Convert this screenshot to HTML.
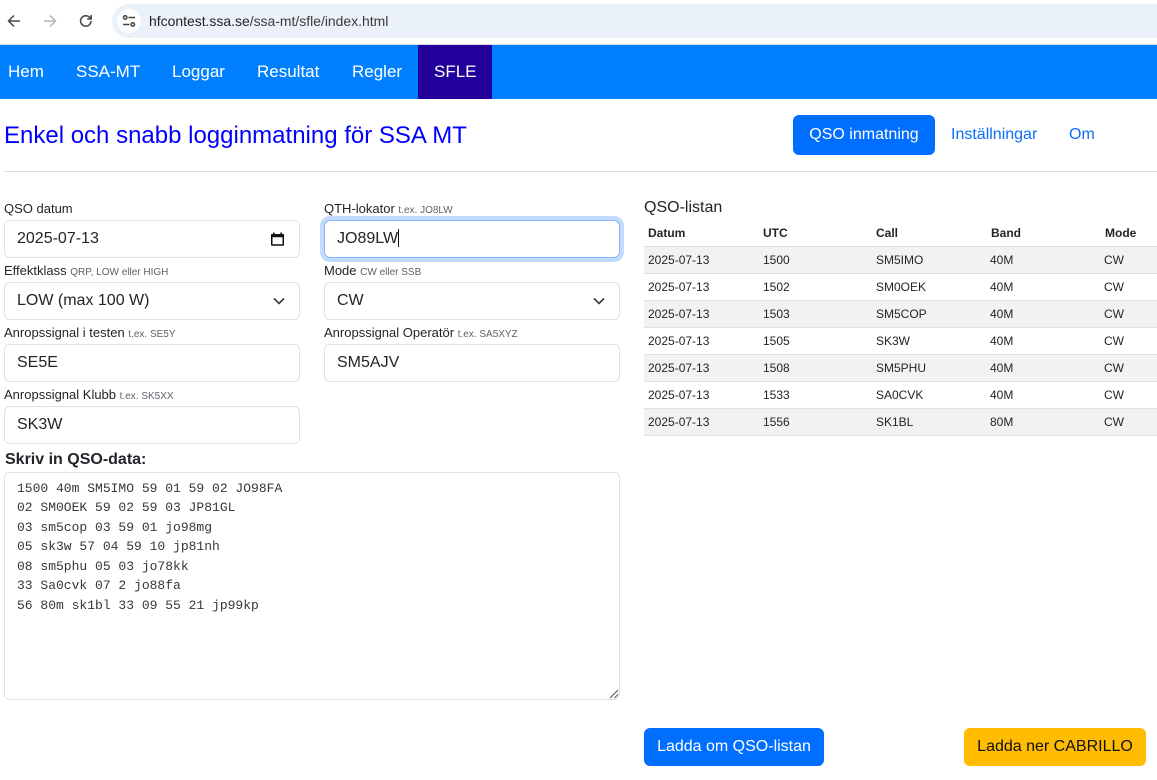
<!DOCTYPE html>
<html lang="sv"><head><meta charset="utf-8"><title>SFLE</title>
<style>
*{box-sizing:border-box}
html,body{margin:0;padding:0;width:1157px;height:780px;overflow:hidden;background:#fff;font-family:"Liberation Sans",sans-serif;color:#212529}
.a{position:absolute;white-space:nowrap}
.nav{top:45px;height:54px;line-height:53px;color:#fff;font-size:17px}
.lbl{font-size:13px;line-height:16px;height:16px;color:#212529}
.lbl small{font-size:10px;color:#5c636a}
.box{height:38px;width:296px;border:1px solid #dee2e6;border-radius:6px;background:#fff;font-size:16px;line-height:36px;padding-left:12px;color:#212529}
.th,.td{font-size:12px;line-height:14px}
.th{font-weight:bold;top:226px}
.row{left:644px;width:513px;height:27px;background:#f2f2f2;border-bottom:1px solid #dee2e6}
.row.w{background:#fff}
.btn{height:38px;border-radius:6px;font-size:16px;line-height:38px;text-align:center}
.mono{left:17px;font-family:"Liberation Mono",monospace;font-size:13px;line-height:19.5px;color:#33383d}
svg{position:absolute;display:block}
</style></head><body>

<!-- browser bar -->
<div class="a" style="left:0;top:0;width:1157px;height:45px;background:#fff;border-bottom:1px solid #d9d9d9"></div>
<svg style="left:6px;top:13px" width="16" height="16" viewBox="0 0 16 16" fill="none" stroke="#4a4a4a" stroke-width="1.5"><path d="M14 8H2.5M8 2.5L2.5 8L8 13.5"/></svg>
<svg style="left:42px;top:13px" width="16" height="16" viewBox="0 0 16 16" fill="none" stroke="#b5b5b5" stroke-width="1.5"><path d="M2 8H13.5M8 2.5L13.5 8L8 13.5"/></svg>
<svg style="left:78px;top:13px" width="16" height="16" viewBox="0 0 16 16" fill="none" stroke="#4a4a4a" stroke-width="1.6"><path d="M13 8A5.2 5.2 0 1 1 11.4 4.2L13.2 6M13.2 2V6H9.2"/></svg>
<div class="a" style="left:112px;top:4px;width:1045px;height:34px;background:#ebf1f9;border-radius:17px 0 0 17px"></div>
<div class="a" style="left:117px;top:9px;width:24px;height:24px;background:#fff;border-radius:12px"></div>
<svg style="left:122px;top:14px" width="14" height="14" viewBox="0 0 14 14" fill="none" stroke="#444" stroke-width="1.5"><circle cx="3.2" cy="3.5" r="1.7"/><path d="M6.5 3.5H13M1 10.5H7.5"/><circle cx="10.8" cy="10.5" r="1.7"/></svg>
<div class="a" style="left:149px;top:13px;font-size:13.95px;line-height:17px;color:#222">hfcontest.ssa.se<span style="color:#3c3c3c">/ssa-mt/sfle/index.html</span></div>

<!-- nav -->
<div class="a" style="left:0;top:45px;width:1157px;height:54px;background:#0080ff"></div>
<div class="a" style="left:418px;top:45px;width:74px;height:54px;background:#22009c"></div>
<div class="a nav" style="left:8px">Hem</div>
<div class="a nav" style="left:76px">SSA-MT</div>
<div class="a nav" style="left:172px">Loggar</div>
<div class="a nav" style="left:257px">Resultat</div>
<div class="a nav" style="left:352px">Regler</div>
<div class="a nav" style="left:434px">SFLE</div>

<!-- header -->
<div class="a" style="left:4px;top:121px;font-size:24px;line-height:30px;color:#0000ff">Enkel och snabb logginmatning för SSA MT</div>
<div class="a" style="left:793px;top:115px;width:142px;height:40px;background:#006eff;border-radius:6px;color:#fff;font-size:16px;line-height:40px;text-align:center">QSO inmatning</div>
<div class="a" style="left:951px;top:125px;font-size:16px;line-height:20px;color:#0d6efd">Inställningar</div>
<div class="a" style="left:1069px;top:125px;font-size:16px;line-height:20px;color:#0d6efd">Om</div>
<div class="a" style="left:4px;top:171px;width:1153px;height:1px;background:#dcdcdc"></div>

<!-- left col -->
<div class="a lbl" style="left:4px;top:201px">QSO datum</div>
<div class="a box" style="left:4px;top:220px">2025-07-13</div>
<svg style="left:270px;top:231px" width="15" height="16" viewBox="0 0 15 16"><path d="M3 1.5h1.6V3h5.8V1.5H12V3h1.2c.5 0 .8.4.8.8v10c0 .5-.4.9-.8.9H1.8c-.5 0-.8-.4-.8-.9v-10c0-.4.3-.8.8-.8H3zM2.5 6.2v7h10v-7z" fill="#111" fill-rule="evenodd"/></svg>

<div class="a lbl" style="left:4px;top:263px">Effektklass <small>QRP, LOW eller HIGH</small></div>
<div class="a box" style="left:4px;top:282px">LOW (max 100 W)</div>
<svg style="left:272px;top:295px" width="14" height="12" viewBox="0 0 14 12" fill="none" stroke="#343a40" stroke-width="1.6"><path d="M2 3.5L7 8.5L12 3.5"/></svg>

<div class="a lbl" style="left:4px;top:325px">Anropssignal i testen <small>t.ex. SE5Y</small></div>
<div class="a box" style="left:4px;top:344px">SE5E</div>

<div class="a lbl" style="left:4px;top:387px">Anropssignal Klubb <small>t.ex. SK5XX</small></div>
<div class="a box" style="left:4px;top:406px">SK3W</div>

<div class="a lbl" style="left:324px;top:201px">QTH-lokator <small>t.ex. JO8LW</small></div>
<div class="a box" style="left:324px;top:220px;border-color:#86b7fe;box-shadow:0 0 0 4px rgba(13,110,253,.25)">JO89LW<span style="display:inline-block;width:1px;height:18px;background:#111;vertical-align:-4px"></span></div>

<div class="a lbl" style="left:324px;top:263px">Mode <small>CW eller SSB</small></div>
<div class="a box" style="left:324px;top:282px">CW</div>
<svg style="left:592px;top:295px" width="14" height="12" viewBox="0 0 14 12" fill="none" stroke="#343a40" stroke-width="1.6"><path d="M2 3.5L7 8.5L12 3.5"/></svg>

<div class="a lbl" style="left:324px;top:325px">Anropssignal Operatör <small>t.ex. SA5XYZ</small></div>
<div class="a box" style="left:324px;top:344px">SM5AJV</div>

<div class="a" style="left:5px;top:450px;font-size:16px;line-height:19px;font-weight:bold;color:#212529">Skriv in QSO-data:</div>
<div class="a" style="left:4px;top:472px;width:616px;height:228px;border:1px solid #dee2e6;border-radius:6px"></div>
<div class="a mono" style="top:479px">1500 40m SM5IMO 59 01 59 02 JO98FA</div>
<div class="a mono" style="top:498px">02 SM0OEK 59 02 59 03 JP81GL</div>
<div class="a mono" style="top:518px">03 sm5cop 03 59 01 jo98mg</div>
<div class="a mono" style="top:537px">05 sk3w 57 04 59 10 jp81nh</div>
<div class="a mono" style="top:557px">08 sm5phu 05 03 jo78kk</div>
<div class="a mono" style="top:576px">33 Sa0cvk 07 2 jo88fa</div>
<div class="a mono" style="top:596px">56 80m sk1bl 33 09 55 21 jp99kp</div>
<svg style="left:609px;top:689px" width="10" height="10" viewBox="0 0 10 10" stroke="#555" stroke-width="1"><path d="M1 9L9 1M5.5 9L9 5.5"/></svg>

<!-- right col -->
<div class="a" style="left:644px;top:198px;font-size:16px;line-height:19px;color:#212529">QSO-listan</div>
<div class="a th" style="left:648px">Datum</div>
<div class="a th" style="left:763px">UTC</div>
<div class="a th" style="left:876px">Call</div>
<div class="a th" style="left:991px">Band</div>
<div class="a th" style="left:1105px">Mode</div>
<div class="a" style="left:644px;top:246px;width:513px;height:1px;background:#dee2e6"></div>

<div class="a row" style="top:247px"></div>
<div class="a row w" style="top:274px"></div>
<div class="a row" style="top:301px"></div>
<div class="a row w" style="top:328px"></div>
<div class="a row" style="top:355px"></div>
<div class="a row w" style="top:382px"></div>
<div class="a row" style="top:409px"></div>

<div class="a td" style="left:648px;top:253px">2025-07-13</div><div class="a td" style="left:763px;top:253px">1500</div><div class="a td" style="left:876px;top:253px">SM5IMO</div><div class="a td" style="left:990px;top:253px">40M</div><div class="a td" style="left:1104px;top:253px">CW</div>
<div class="a td" style="left:648px;top:280px">2025-07-13</div><div class="a td" style="left:763px;top:280px">1502</div><div class="a td" style="left:876px;top:280px">SM0OEK</div><div class="a td" style="left:990px;top:280px">40M</div><div class="a td" style="left:1104px;top:280px">CW</div>
<div class="a td" style="left:648px;top:307px">2025-07-13</div><div class="a td" style="left:763px;top:307px">1503</div><div class="a td" style="left:876px;top:307px">SM5COP</div><div class="a td" style="left:990px;top:307px">40M</div><div class="a td" style="left:1104px;top:307px">CW</div>
<div class="a td" style="left:648px;top:334px">2025-07-13</div><div class="a td" style="left:763px;top:334px">1505</div><div class="a td" style="left:876px;top:334px">SK3W</div><div class="a td" style="left:990px;top:334px">40M</div><div class="a td" style="left:1104px;top:334px">CW</div>
<div class="a td" style="left:648px;top:361px">2025-07-13</div><div class="a td" style="left:763px;top:361px">1508</div><div class="a td" style="left:876px;top:361px">SM5PHU</div><div class="a td" style="left:990px;top:361px">40M</div><div class="a td" style="left:1104px;top:361px">CW</div>
<div class="a td" style="left:648px;top:388px">2025-07-13</div><div class="a td" style="left:763px;top:388px">1533</div><div class="a td" style="left:876px;top:388px">SA0CVK</div><div class="a td" style="left:990px;top:388px">40M</div><div class="a td" style="left:1104px;top:388px">CW</div>
<div class="a td" style="left:648px;top:415px">2025-07-13</div><div class="a td" style="left:763px;top:415px">1556</div><div class="a td" style="left:876px;top:415px">SK1BL</div><div class="a td" style="left:990px;top:415px">80M</div><div class="a td" style="left:1104px;top:415px">CW</div>

<div class="a btn" style="left:644px;top:728px;width:180px;background:#006eff;color:#fff">Ladda om QSO-listan</div>
<div class="a btn" style="left:964px;top:728px;width:182px;background:#ffbc00;color:#111">Ladda ner CABRILLO</div>
</body></html>
